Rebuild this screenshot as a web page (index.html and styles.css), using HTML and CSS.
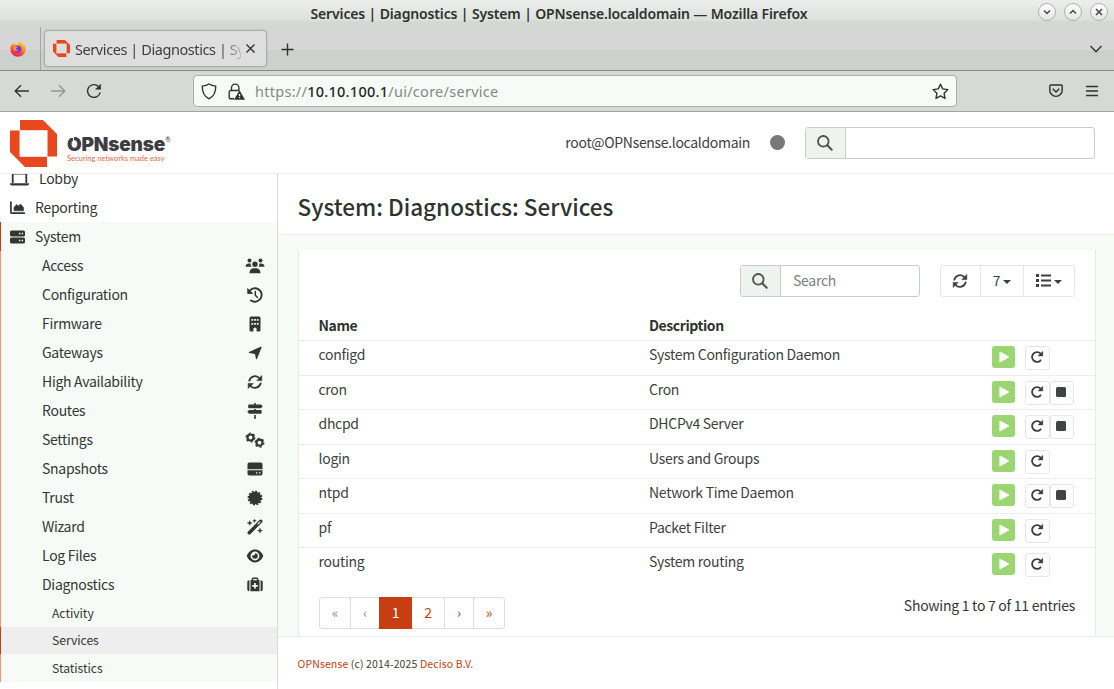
FILE: index.html
```html
<!DOCTYPE html>
<html lang="en">
<head>
<meta charset="utf-8">
<title>Services | Diagnostics | System | OPNsense.localdomain</title>
<link rel="stylesheet" href="styles.css">
</head>
<body>
<svg class="defs" width="0" height="0">
  <symbol id="search" viewBox="0 0 16 16"><circle cx="6.300" cy="6.300" r="5.300" fill="none" stroke="currentColor" stroke-width="1.800"/><path d="M10.300 10.300 14.700 14.700" stroke="currentColor" stroke-width="2" stroke-linecap="round"/></symbol>
  <symbol id="sync" viewBox="0 0 16 16"><g id="half"><path d="M2.300 6.700A5.900 5.900 0 0 1 12.600 4.300" fill="none" stroke="currentColor" stroke-width="1.800" stroke-linecap="round"/><path d="M14.800 1.600v5H9.800z" fill="currentColor" stroke="currentColor" stroke-width=".6" stroke-linejoin="round"/></g><use href="#half" transform="rotate(180 8 8)"/></symbol>
  <symbol id="redo" viewBox="0 0 14 14"><path d="M10.600 10.300A4.900 4.900 0 1 1 10.600 3.700" fill="none" stroke="currentColor" stroke-width="1.800" stroke-linecap="round"/><path d="M12.800 1.200v4.800H8z" fill="currentColor" stroke="currentColor" stroke-width=".4" stroke-linejoin="round"/></symbol>
  <symbol id="play" viewBox="0 0 12 12"><path d="M2 1.3v9.4L10.6 6z" fill="currentColor" stroke="currentColor" stroke-width="1.2" stroke-linejoin="round"/></symbol>
  <symbol id="mark" viewBox="0 0 47 47"><path fill="#e8481f" d="M10 0h23l14 14v22.500h-9.800V10.500H10zM0 10.500h9.800V36.500H37V47H15L0 32z"/><path d="M10 10.500h27.200v26H10z" fill="none" stroke="#fff" stroke-width=".6"/></symbol>
</svg>

<div class="titlebar">
  <div class="win-title">Services | Diagnostics | System | OPNsense.localdomain — Mozilla Firefox</div>
  <div class="win-buttons">
    <span class="win-btn"><svg width="8" height="8" viewBox="0 0 8 8"><path d="M1 2.500 4 5.500 7 2.500"/></svg></span>
    <span class="win-btn"><svg width="8" height="8" viewBox="0 0 8 8"><path d="M1 5.500 4 2.500 7 5.500"/></svg></span>
    <span class="win-btn"><svg width="8" height="8" viewBox="0 0 8 8"><path d="M1 1l6 6M7 1 1 7"/></svg></span>
  </div>
</div>
<div class="tabstrip">
  <div class="pinned">
    <svg width="16" height="16" viewBox="0 0 16 16">
      <defs><linearGradient id="ff" x1=".8" y1="0" x2=".3" y2="1"><stop offset="0" stop-color="#ffe03a"/><stop offset=".45" stop-color="#ff8a1c"/><stop offset=".8" stop-color="#f8344c"/><stop offset="1" stop-color="#e31587"/></linearGradient></defs>
      <path d="M10.500 0c.3 1.400 1.300 2.100 2.300 3 .6.600 1 1.200 1.200 1.700l.2-1.200C15.300 5 15.800 6.600 15.700 8.300 15.500 12.600 12.200 15.800 8 15.800S.4 12.500.4 8.300c0-2.300.8-4.200 1.600-5.300l.5 1.200C3 3.300 3.600 2.600 4.300 2c0 .7.200 1.300.6 1.800 1-.4 2.100-.3 3 0C8.200 2.200 9.100.8 10.500 0z" fill="url(#ff)"/>
      <circle cx="8" cy="8.300" r="3.500" fill="#7338d8"/><path d="M3.500 6c1.800-.5 3.500-.1 4.500.7-1.200.1-2 .6-2 1.200 0 .7.900 1.100 2.400 1.100-.7 1.300-2.800 1.500-4 .4C3.700 8.500 3.400 7.200 3.500 6z" fill="#ff9421"/>
    </svg>
  </div>
  <div class="tab">
    <svg width="17" height="17"><use href="#mark"/></svg>
    <span class="tab-title">Services | Diagnostics | Sy</span>
    <svg class="line" width="9" height="9" viewBox="0 0 9 9"><path d="M.5.5l8 8M8.500.5l-8 8"/></svg>
  </div>
  <svg class="line new-tab" width="13" height="13" viewBox="0 0 13 13"><path d="M6.500.5v12M.5 6.500h12"/></svg>
  <svg class="line tab-list" width="14" height="8" viewBox="0 0 14 8"><path d="M1.500 1 7 6.700 12.500 1"/></svg>
</div>
<div class="toolbar">
  <div class="nav-icons">
    <svg class="line" width="16" height="14" viewBox="0 0 16 14"><path d="M15 7H1.500M7 1.200 1.200 7 7 12.800"/></svg>
    <svg class="line dim" width="16" height="14" viewBox="0 0 16 14"><path d="M1 7h13.500M9 1.200 14.800 7 9 12.800"/></svg>
    <svg class="line" width="16" height="16" viewBox="0 0 16 16"><path d="M14.200 9.300A6.400 6.400 0 1 1 12.500 3.500"/><path d="M14.600 1.200v5h-5z" fill="currentColor" stroke-width=".6"/></svg>
  </div>
  <div class="urlbar">
    <svg class="line" width="16" height="17" viewBox="0 0 16 17"><path d="M8 1c1.800 1.200 3.800 1.900 6.700 2.100.2 5-.9 9.700-6.700 12.700C2.200 12.800 1.100 8.100 1.300 3.100 4.200 2.900 6.200 2.200 8 1z"/></svg>
    <svg class="line lock" width="17" height="17" viewBox="0 0 17 17"><path d="M3.500 7.500V4.800a3.700 3.700 0 0 1 7.400 0v2.700M6 15.800H2.600A1.400 1.400 0 0 1 1.200 14.400V9a1.500 1.500 0 0 1 1.500-1.500h8.500"/><path d="M11.500 8.700 15.800 16H7.200z" fill="currentColor"/><path d="M11.500 11v2.300M11.500 14.200v1.100" stroke="#fff"/></svg>
    <span class="url">https://<b>10.10.100.1</b>/ui/core/service</span>
    <svg class="line star" width="17" height="17" viewBox="0 0 17 17"><path d="m8.500 1.200 2.200 4.700 5.200.7-3.800 3.600.9 5.200-4.500-2.500-4.500 2.500.9-5.200L1.100 6.600l5.200-.7z" stroke-linejoin="round"/></svg>
  </div>
  <div class="tool-right">
    <svg class="line" width="14" height="14" viewBox="0 0 14 14"><path d="M2 1h10a1.200 1.200 0 0 1 1.200 1.200v4A6.200 6.200 0 0 1 .8 6.200v-4A1.200 1.200 0 0 1 2 1zM3.700 4.800 7 8l3.300-3.200"/></svg>
    <svg class="line" width="12" height="12" viewBox="0 0 12 12"><path d="M0 1.500h12M0 6h12M0 10.500h12"/></svg>
  </div>
</div>

<header class="page-head">
  <svg class="logo" width="47" height="47"><use href="#mark"/></svg>
  <div class="brand">
    <div class="brand-name"><span class="brand-o">O</span>PNsense<sup>®</sup></div>
    <div class="brand-tag">Securing networks made easy</div>
  </div>
  <div class="user">root@OPNsense.localdomain</div>
  <span class="status-dot"></span>
  <div class="input-group head-search"><span class="addon"><svg width="16" height="16"><use href="#search"/></svg></span><span class="field"></span></div>
</header>

<div class="columns">
  <nav class="sidebar">
    <div class="menu">
      <div class="item lobby"><svg width="19" height="14" viewBox="0 0 19 14"><path d="M2.700 11V1.500h13.600V11" fill="none" stroke="currentColor" stroke-width="1.800"/><path d="M0 11.300h19v.5a1.700 1.700 0 0 1-1.700 1.700H1.700A1.700 1.700 0 0 1 0 11.800z" fill="currentColor"/></svg><span>Lobby</span></div>
      <div class="item"><svg width="15" height="14" viewBox="0 0 15 14"><path d="M.9 1v10.200a1 1 0 0 0 1 1H14.300" fill="none" stroke="currentColor" stroke-width="1.700" stroke-linecap="round"/><path d="M4 9.800V6.500l2.500-3 2 1.500 2-2 3 3.500v3.300z" fill="currentColor" stroke="currentColor" stroke-width=".6" stroke-linejoin="round"/></svg><span>Reporting</span></div>
      <div class="item active"><svg width="15" height="14" viewBox="0 0 15 14"><rect y=".5" width="15" height="6" rx="1.600" fill="currentColor"/><rect y="7.500" width="15" height="6" rx="1.600" fill="currentColor"/><path d="M9 3.500h1.400M11.700 3.500h1.400M9 10.500h1.400M11.700 10.500h1.400" stroke="#f6fbf7" stroke-width="1.300"/></svg><span>System</span></div>
      <div class="sub">
        <div class="item"><span>Access</span><svg width="19" height="16" viewBox="0 0 19 16" fill="currentColor"><circle cx="4" cy="2.500" r="2"/><circle cx="15" cy="2.500" r="2"/><circle cx="9.500" cy="6.300" r="2.700"/><path d="M0 8.800C0 6.500 1.500 5.500 3.500 5.500h1.800c-.4 1.200 0 2.500.8 3.300zM19 8.800c0-2.300-1.500-3.300-3.500-3.300h-1.800c.4 1.200 0 2.500-.8 3.300zM4 15.300c0-3.500 1.800-5.100 4.300-5.100h2.400c2.500 0 4.300 1.600 4.300 5.100z"/></svg></div>
        <div class="item"><span>Configuration</span><svg width="16" height="16" viewBox="0 0 16 16"><path d="M2.200 4.500A6.700 6.700 0 1 1 4 13.400" fill="none" stroke="currentColor" stroke-width="1.900" stroke-linecap="round"/><path d="M.7 1.500v5h5z" fill="currentColor" stroke="currentColor" stroke-width=".8" stroke-linejoin="round"/><path d="M8.300 4.500V8.200l2.200 2.300" fill="none" stroke="currentColor" stroke-width="1.500" stroke-linecap="round"/></svg></div>
        <div class="item"><span>Firmware</span><svg width="16" height="16" viewBox="0 0 16 16"><path d="M4 .5h8a1.500 1.500 0 0 1 1.500 1.500v12a1.500 1.500 0 0 1-1.500 1.500H9.600V13a1.600 1.600 0 0 0-3.200 0v2.500H4A1.500 1.500 0 0 1 2.500 14V2A1.500 1.500 0 0 1 4 .5z" fill="currentColor"/><path d="M4.400 3.800h7.200M4.400 7.800h7.200" stroke="#f6fbf7" stroke-width="1.800" stroke-dasharray="1.800 .9"/></svg></div>
        <div class="item"><span>Gateways</span><svg width="16" height="16" viewBox="0 0 16 16"><path d="M14 2.200 9.500 13.600 8.500 8.500 2.300 7.500z" fill="currentColor" stroke="currentColor" stroke-width="1.200" stroke-linejoin="round"/></svg></div>
        <div class="item"><span>High Availability</span><svg width="16" height="16" viewBox="0 0 16 16"><use href="#sync" width="16" height="16"/></svg></div>
        <div class="item"><span>Routes</span><svg width="16" height="16" viewBox="0 0 16 16" fill="currentColor"><path d="M7.200 0h1.600v1.500h5.200l1.700 1.800L14 5.200H2a.8.8 0 0 1-.8-.8v-2a.9.9 0 0 1 .8-.9h5.200zM7.200 5.900h1.600v1h5a.9.9 0 0 1 .9.900v2a.9.9 0 0 1-.9.900H2L.3 8.800 2 6.900h5.200zM7.200 12h1.600v3.300a.8.800 0 0 1-1.600 0z"/></svg></div>
        <div class="item"><span>Settings</span><svg width="20" height="16" viewBox="0 0 20 16" fill="none" stroke="currentColor"><circle cx="5.500" cy="5.500" r="3" stroke-width="2.200"/><circle cx="5.500" cy="5.500" r="4.400" stroke-width="1.200" stroke-dasharray="2 2.608"/><circle cx="14.500" cy="10.700" r="3" stroke-width="2.200"/><circle cx="14.500" cy="10.700" r="4.400" stroke-width="1.200" stroke-dasharray="2 2.608"/></svg></div>
        <div class="item"><span>Snapshots</span><svg width="16" height="14" viewBox="0 0 16 14"><path d="M2.300.5h11.400a1.800 1.800 0 0 1 1.800 1.800v5H.5v-5A1.800 1.800 0 0 1 2.300.5zM.5 8.300h15v3.400a1.800 1.800 0 0 1-1.800 1.800H2.300a1.800 1.800 0 0 1-1.800-1.800z" fill="currentColor"/><path d="M9 10.900h1.400M12 10.900h1.400" stroke="#f6fbf7" stroke-width="1.400"/></svg></div>
        <div class="item"><span>Trust</span><svg width="16" height="16" viewBox="0 0 16 16"><circle cx="8" cy="8" r="6.300" fill="currentColor"/><circle cx="8" cy="8" r="6.700" fill="none" stroke="currentColor" stroke-width="1.500" stroke-dasharray="2 1.508"/></svg></div>
        <div class="item"><span>Wizard</span><svg width="16" height="16" viewBox="0 0 16 16"><path d="M2.300 13.700 13.700 2.300" stroke="currentColor" stroke-width="3.600" stroke-linecap="round"/><path d="m10.600 5.400 2.700-2.700" stroke="#f6fbf7" stroke-width="1.100"/><path d="m2.700 1.500.7 1.800 1.800.7-1.800.7-.7 1.800-.7-1.800L.2 4 2 3.300zM7.500 0l.5 1.300 1.300.5-1.300.5-.5 1.300L7 2.300l-1.300-.5L7 1.300zM13 9l.7 1.900 1.900.7-1.900.7-.7 1.900-.7-1.900-1.900-.7 1.900-.7z" fill="currentColor" stroke="currentColor" stroke-width=".4"/></svg></div>
        <div class="item"><span>Log Files</span><svg width="18" height="14" viewBox="0 0 18 14"><path d="M9 .6c3.800 0 6.700 2.700 8.300 6.400-1.600 3.700-4.500 6.400-8.300 6.400S2.300 10.700.7 7C2.300 3.300 5.200.6 9 .6z" fill="currentColor"/><circle cx="9" cy="7" r="4.400" fill="#f6fbf7"/><path d="M9 4.200a2.800 2.800 0 1 1-2.800 2.800c0-.2 0-.5.1-.7A1.900 1.900 0 0 0 9 4.200z" fill="currentColor"/></svg></div>
        <div class="item"><span>Diagnostics</span><svg width="16" height="16" viewBox="0 0 16 16"><path d="M2.400 3.300v11H2A1.800 1.800 0 0 1 .3 12.500v-7A2 2 0 0 1 2.400 3.300zM13.600 3.300v11h.4a1.800 1.800 0 0 0 1.700-1.800v-7a2 2 0 0 0-2.100-2.200zM3.500 3.300h9v11h-9z" fill="currentColor"/><path d="M5.300 4V2.300A1 1 0 0 1 6.300 1.300h3.400a1 1 0 0 1 1 1V4" fill="none" stroke="currentColor" stroke-width="1.500"/><path d="M8 6v5.600M5.200 8.800h5.600" stroke="#f6fbf7" stroke-width="1.700"/></svg></div>
        <div class="item leaf">Activity</div>
        <div class="item leaf current">Services</div>
        <div class="item leaf">Statistics</div>
      </div>
    </div>
  </nav>

  <main class="content">
    <h1>System: Diagnostics: Services</h1>
    <div class="canvas">
      <section class="card">
        <div class="actions">
          <div class="input-group"><span class="addon"><svg width="16" height="16"><use href="#search"/></svg></span><span class="field">Search</span></div>
          <div class="btn-group">
            <span class="btn w1"><svg width="16" height="16"><use href="#sync"/></svg></span>
            <span class="btn w2"><span class="count">7</span><i class="caret"></i></span>
            <span class="btn w3"><svg width="15" height="13" viewBox="0 0 15 13" fill="currentColor"><path d="M0 0h3v3H0zM0 5h3v3H0zM0 10h3v3H0zM5 .6h10v1.800H5zM5 5.600h10v1.800H5zM5 10.600h10v1.800H5z"/></svg><i class="caret"></i></span>
          </div>
        </div>
        <div class="table">
          <div class="tr th"><span class="name">Name</span><span class="desc">Description</span></div>
          <div class="tr"><span class="name">configd</span><span class="desc">System Configuration Daemon</span><span class="run"><svg width="12" height="12"><use href="#play"/></svg></span><span class="act"><svg width="14" height="14"><use href="#redo"/></svg></span></div>
          <div class="tr"><span class="name">cron</span><span class="desc">Cron</span><span class="run"><svg width="12" height="12"><use href="#play"/></svg></span><span class="act"><svg width="14" height="14"><use href="#redo"/></svg></span><span class="act"><i class="stop"></i></span></div>
          <div class="tr"><span class="name">dhcpd</span><span class="desc">DHCPv4 Server</span><span class="run"><svg width="12" height="12"><use href="#play"/></svg></span><span class="act"><svg width="14" height="14"><use href="#redo"/></svg></span><span class="act"><i class="stop"></i></span></div>
          <div class="tr"><span class="name">login</span><span class="desc">Users and Groups</span><span class="run"><svg width="12" height="12"><use href="#play"/></svg></span><span class="act"><svg width="14" height="14"><use href="#redo"/></svg></span></div>
          <div class="tr"><span class="name">ntpd</span><span class="desc">Network Time Daemon</span><span class="run"><svg width="12" height="12"><use href="#play"/></svg></span><span class="act"><svg width="14" height="14"><use href="#redo"/></svg></span><span class="act"><i class="stop"></i></span></div>
          <div class="tr"><span class="name">pf</span><span class="desc">Packet Filter</span><span class="run"><svg width="12" height="12"><use href="#play"/></svg></span><span class="act"><svg width="14" height="14"><use href="#redo"/></svg></span></div>
          <div class="tr"><span class="name">routing</span><span class="desc">System routing</span><span class="run"><svg width="12" height="12"><use href="#play"/></svg></span><span class="act"><svg width="14" height="14"><use href="#redo"/></svg></span></div>
        </div>
        <div class="table-foot">
          <div class="pages"><span class="off">«</span><span class="off p2">‹</span><span class="on">1</span><span class="p4">2</span><span class="p5">›</span><span class="p6">»</span></div>
          <div class="info">Showing 1 to 7 of 11 entries</div>
        </div>
      </section>
    </div>
    <footer><a>OPNsense</a> (c) 2014-2025 <a>Deciso B.V.</a></footer>
  </main>
</div>
</body>
</html>
```
FILE: styles.css
```css
* { box-sizing: border-box; }
body {
  margin: 0;
  width: 1114px;
  height: 689px;
  overflow: hidden;
  display: flex;
  flex-direction: column;
  background: #fff;
  color: #3c3f3c;
  font: 14px/20px "Noto Sans CJK SC", "Open Sans", sans-serif;
  letter-spacing: -.29px;
  white-space: nowrap;
}
svg { display: block; flex: none; }
.defs { position: absolute; }
.line { fill: none; stroke: currentColor; stroke-width: 1.4; color: #2e3330; }
.dim { color: #949995; }

/* Browser window */
.titlebar {
  height: 30px;
  flex: none;
  display: grid;
  grid-template-columns: 1fr;
  background: linear-gradient(#eceeec, #dde0dd 20px, #d4d8d4 22px, #d4d8d4 30px);
}
.titlebar > * { grid-area: 1 / 1; }
.win-title {
  padding-left: 4px;
  text-align: center;
  font: 600 14px/28px "Noto Sans", sans-serif;
  letter-spacing: -.14px;
  color: #2d322e;
}
.win-buttons { display: flex; gap: 8px; justify-content: flex-end; padding: 3px 6px 0 0; }
.win-btn {
  width: 18px;
  height: 18px;
  border-radius: 50%;
  border: 1.5px solid #aeb1ae;
  background: linear-gradient(#fff, #e3e5e3);
  display: grid;
  place-items: center;
}
.win-btn svg { fill: none; stroke: #454945; stroke-width: 1.5; }
.tabstrip {
  height: 41px;
  flex: none;
  display: flex;
  background: linear-gradient(#d6d6d6 20px, #cdd1cd 20px);
  border-bottom: 1px solid #878b88;
}
.pinned { width: 41px; border-right: 1px solid #a3a7a3; margin-top: -3px; padding: 14px 0 0 10px; }
.tab {
  width: 223px;
  height: 37px;
  margin: 0 14px 0 3px;
  border-radius: 4px;
  background: #dedede;
  border: 1px solid #acaeac;
  box-shadow: 0 0 2px #a5a8a5;
  display: flex;
  align-items: center;
  padding: 0 11px 0 8px;
  gap: 5px;
}
.tab-title {
  width: 166px;
  flex: none;
  font: 14.500px/24px "Noto Sans", sans-serif;
  letter-spacing: -.42px;
  -webkit-mask-image: linear-gradient(90deg, #000 145px, transparent 172px);
  mask-image: linear-gradient(90deg, #000 145px, transparent 172px);
}
.new-tab { margin-top: 13px; }
.tab-list { margin: 15px 11px 0 auto; }
.toolbar {
  height: 41px;
  flex: none;
  display: flex;
  align-items: center;
  background: #d6dad6;
  border-bottom: 1px solid #a0a5a1;
}
.nav-icons { width: 193px; padding-left: 14px; display: flex; gap: 20px; align-items: center; }
.urlbar {
  width: 764px;
  height: 32px;
  border: 1px solid #a9aeaa;
  border-radius: 4px;
  background: #f7fbf8;
  display: flex;
  align-items: center;
  padding: 0 7px;
}
.lock { margin-left: 11px; }
.url { margin-left: 10px; font: 14.500px/24px "Noto Sans", sans-serif; letter-spacing: .27px; color: #848985; }
.url b { font-weight: 500; color: #232724; }
.star { margin-left: auto; }
.tool-right { display: flex; align-items: center; gap: 23px; margin-left: 92px; }

/* Page header */
.page-head {
  height: 62px;
  flex: none;
  display: flex;
  align-items: center;
  border-bottom: 1px solid #eceeec;
  padding-left: 10px;
}
.logo { margin-top: 1px; }
.brand { margin-left: 10px; width: 110px; padding-top: 12px; }
.brand-name { font: 900 19px/19px Inter, Lato, sans-serif; letter-spacing: -.2px; color: #403c43; }
.brand-o { position: relative; }
.brand-o::after {
  content: "";
  position: absolute;
  left: 1px;
  top: 3px;
  width: 5px;
  height: 5px;
  border-right: 1.500px solid #fff;
  border-top: 2px solid #fff;
}
.brand-name sup { font: 7px/7px Lato, sans-serif; vertical-align: 9px; }
.brand-tag { font: 7.500px/9px Lato, sans-serif; letter-spacing: 0; color: #ea6846; }
.user { margin-left: auto; letter-spacing: -.32px; }
.status-dot { width: 15px; height: 15px; border-radius: 50%; background: #757a76; margin: 0 20px; }
.input-group {
  display: flex;
  height: 32px;
  width: 180px;
  border: 1px solid #c8cdc9;
  border-radius: 3px;
  background: #fff;
}
.head-search { width: 290px; margin-right: 19px; }
.addon {
  width: 40px;
  padding-right: 1px;
  border-right: 1px solid #c8cdc9;
  background: #eef3ef;
  color: #4d524e;
  display: grid;
  place-items: center;
}
.field { padding: 4px 12px; color: #7d817e; }

/* Columns */
.columns { flex: 1; min-height: 0; display: flex; }
.sidebar { width: 278px; flex: none; border-right: 1px solid #d8dbd8; overflow: hidden; }
.menu { margin-top: -10px; color: #333734; }
.item { height: 29px; display: flex; align-items: center; padding-left: 10px; gap: 10px; }
.item > span, .user, .count { padding-bottom: 2px; }
.item.active { background: #f6fbf7; border-left: 1px solid #c63e12; padding-left: 9px; }
.sub { background: #f6fbf7; border-left: 1px solid #fa9574; }
.sub .item { padding-left: 41px; justify-content: space-between; }
.sub .item svg { width: 20px; margin-right: 12px; }
.sub .item.leaf { justify-content: flex-start; padding-left: 51px; height: 27.500px; font-size: 12.200px; letter-spacing: -.05px; }
.sub .item.current { background: #eee; border-left: 1px solid #c63e12; margin-left: -1px; }

.content { flex: 1; min-width: 0; display: flex; flex-direction: column; }
h1 {
  height: 61px;
  margin: 0;
  flex: none;
  padding: 0 19.500px;
  font: 500 22.500px/64px "Noto Sans CJK SC", sans-serif;
  letter-spacing: 0;
  color: #2f332f;
  border-bottom: 1px solid #eceeec;
}
.canvas { height: 402px; flex: none; background: #f6fbf7; padding: 15px 18px 0 20px; border-bottom: 1px solid #eceeec; }
.card { height: 386px; background: #fff; border: solid #e8ebe8; border-width: 0 1px; }
.actions { display: flex; justify-content: flex-end; gap: 20px; padding: 15px 20px 0 0; }
.btn-group { display: flex; width: 135px; height: 32px; border: 1px solid #e5e8e5; border-radius: 3px; }
.btn { display: flex; align-items: center; justify-content: center; gap: 3px; padding-bottom: 1px; }
.w1 { width: 40px; border-right: 1px solid #e5e8e5; padding-right: 1px; }
.w2 { width: 43px; border-right: 1px solid #e5e8e5; }
.w3 { flex: 1; }
.caret { border: 4px solid transparent; border-top-color: currentColor; border-bottom: 0; margin-top: 3px; }

.table { padding-top: 14px; }
.tr { display: flex; height: 34.500px; border-top: 1px solid #eceeec; padding-left: 19.500px; line-height: 26px; }
.th { height: 29px; border: 0; font-weight: 700; line-height: 28px; letter-spacing: -.42px; }
.name { width: 330.500px; }
.desc { width: 343px; }
.th .name, .th .desc { color: #2f332f; }
.run {
  width: 23px;
  height: 22px;
  margin: 5px 10px 0 0;
  border-radius: 3px;
  background: #9bd672;
  color: #fff;
  display: grid;
  place-items: center;
}
.act {
  width: 24.500px;
  height: 24px;
  margin-top: 5px;
  padding: 0 1px 2px 0;
  border: 1px solid #e5e8e5;
  border-radius: 3px;
  display: grid;
  place-items: center;
}
.stop { width: 10px; height: 10px; border-radius: 1.500px; background: #414542; }
.table-foot { display: flex; justify-content: space-between; padding: 15px 20px 0; }
.pages { display: flex; height: 32px; width: 186px; border: 1px solid #dcdfdc; border-radius: 3px; color: #c63e12; }
.pages span { width: 31px; line-height: 28px; text-align: center; border-right: 1px solid #dcdfdc; }
.pages .off { color: #8a8e8b; }
.pages .p2 { width: 28px; border-right: 0; }
.pages .on { width: 33px; height: 32px; margin: -1px 0; line-height: 30px; background: #c63e12; color: #fff; border: 0; }
.pages .p4 { width: 33px; }
.pages .p5 { width: 29px; }
.pages .p6 { width: 30px; border: 0; }
.info { line-height: 16px; color: #333734; letter-spacing: -.26px; }
footer { padding: 17px 19.500px; font-size: 10.500px; letter-spacing: .12px; }
footer a { color: #c63e12; }
```
